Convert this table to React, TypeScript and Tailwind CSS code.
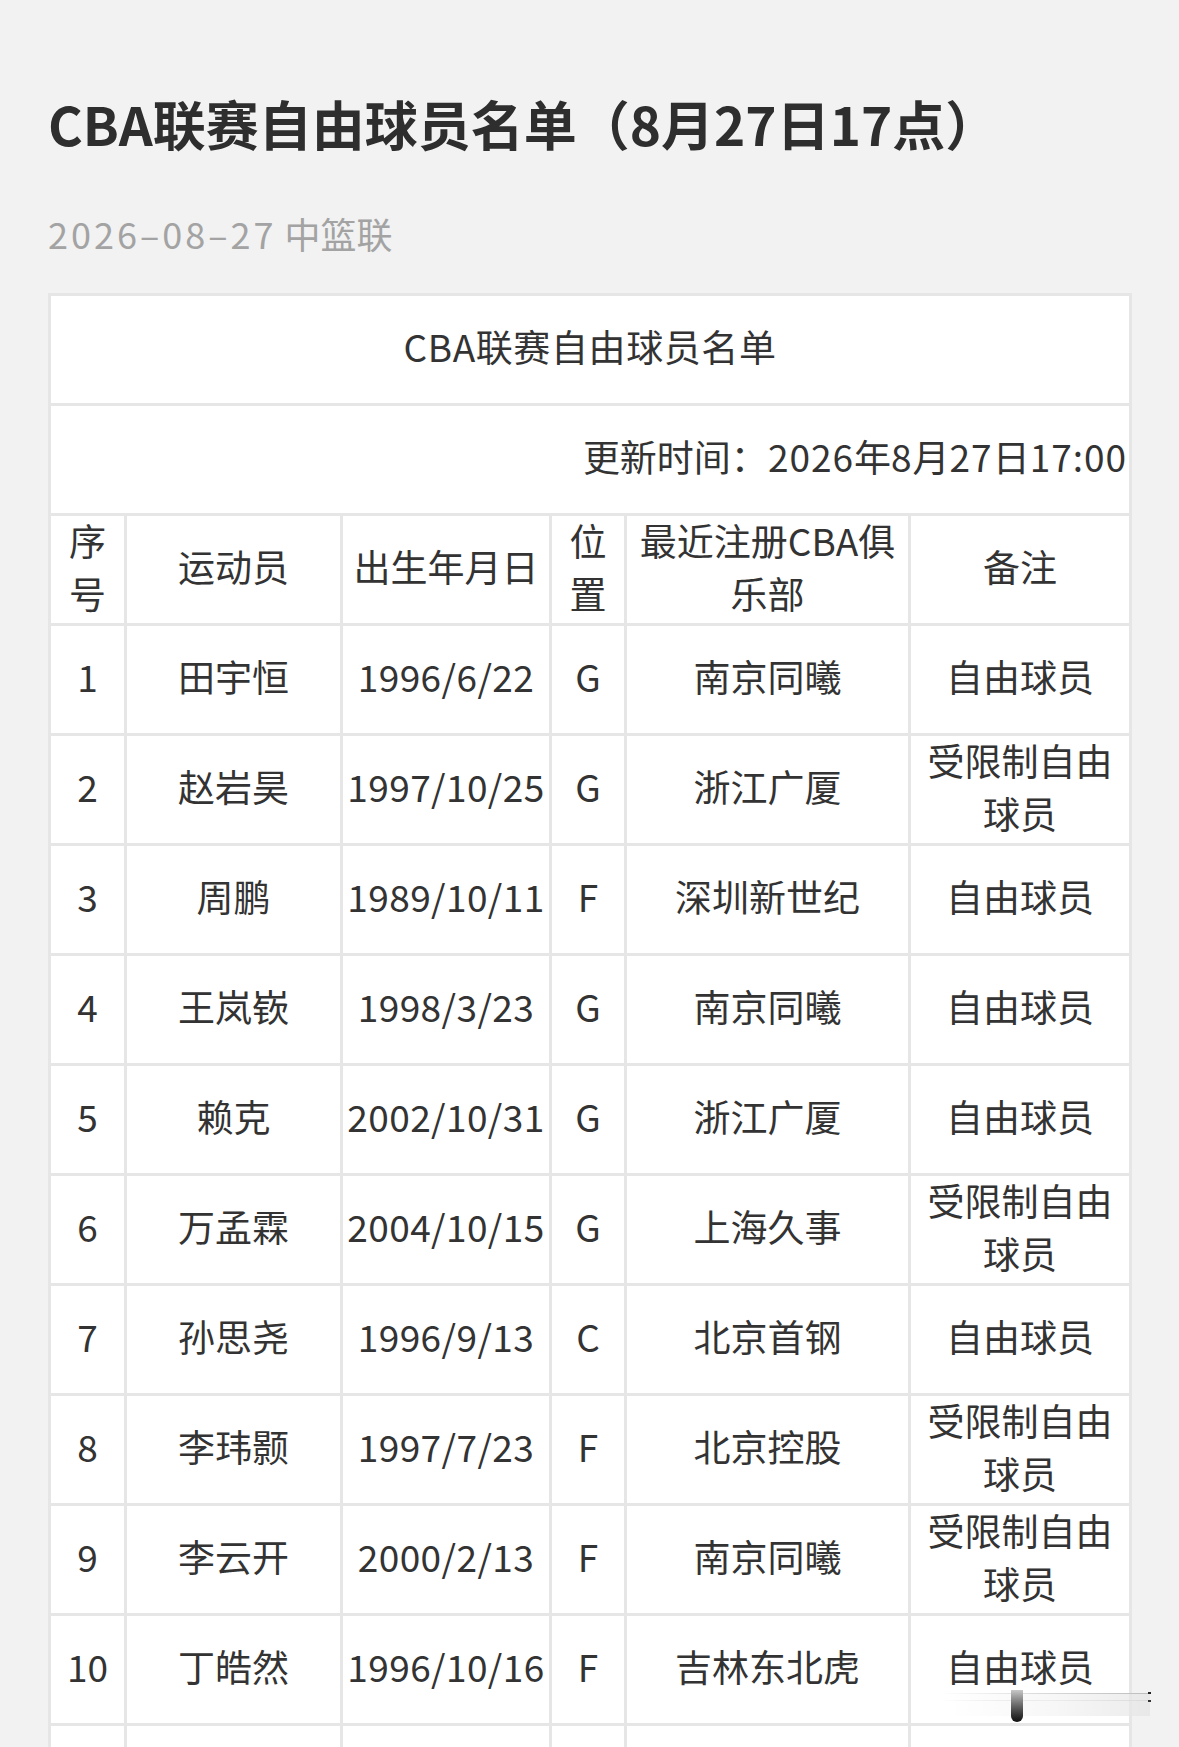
import React from "react";

type Row = { no: string; name: string; birth: string; pos: string; club: string; note: string };

const rows: Row[] = [
  { no: "1", name: "田宇恒", birth: "1996/6/22", pos: "G", club: "南京同曦", note: "自由球员" },
  { no: "2", name: "赵岩昊", birth: "1997/10/25", pos: "G", club: "浙江广厦", note: "受限制自由球员" },
  { no: "3", name: "周鹏", birth: "1989/10/11", pos: "F", club: "深圳新世纪", note: "自由球员" },
  { no: "4", name: "王岚嵚", birth: "1998/3/23", pos: "G", club: "南京同曦", note: "自由球员" },
  { no: "5", name: "赖克", birth: "2002/10/31", pos: "G", club: "浙江广厦", note: "自由球员" },
  { no: "6", name: "万孟霖", birth: "2004/10/15", pos: "G", club: "上海久事", note: "受限制自由球员" },
  { no: "7", name: "孙思尧", birth: "1996/9/13", pos: "C", club: "北京首钢", note: "自由球员" },
  { no: "8", name: "李玮颢", birth: "1997/7/23", pos: "F", club: "北京控股", note: "受限制自由球员" },
  { no: "9", name: "李云开", birth: "2000/2/13", pos: "F", club: "南京同曦", note: "受限制自由球员" },
  { no: "10", name: "丁皓然", birth: "1996/10/16", pos: "F", club: "吉林东北虎", note: "自由球员" },
];

const cell = "bg-white h-[107px] p-0 text-center align-middle leading-[53px]";

function Td({
  children,
  className = "",
  colSpan,
}: {
  children: React.ReactNode;
  className?: string;
  colSpan?: number;
}) {
  return (
    <td colSpan={colSpan} className={`${cell} ${className}`}>
      <div className="-mt-[6px]">{children}</div>
    </td>
  );
}

export default function App() {
  return (
    <div
      className="relative h-[1747px] overflow-hidden bg-[#f2f2f2] pl-[48px] text-[#333333]"
      style={{ fontFamily: '"Noto Sans CJK SC", "Noto Sans", sans-serif' }}
    >
      <h1 className="pt-[92px] h-[154px] text-[53px] leading-[62px] font-bold text-[#2e2e2e] whitespace-nowrap">
        CBA联赛自由球员名单（8月27日17点）
      </h1>
      <div className="mt-[55px] h-[48px] text-[36px] leading-[48px] text-[#a3a3a3] whitespace-nowrap">
        <span className="tracking-[3px]">2026–08–27</span> 中篮联
      </div>
      <table className="mt-[36px] w-[1084px] table-fixed border-separate border-spacing-[3px] bg-[#e6e6e6] text-[37px]">
        <colgroup>
          <col className="w-[73px]" />
          <col className="w-[213px]" />
          <col className="w-[206px]" />
          <col className="w-[72px]" />
          <col className="w-[281px]" />
          <col className="w-[218px]" />
        </colgroup>
        <tbody>
          <tr>
            <Td colSpan={6} className="tracking-[0.6px]">
              CBA联赛自由球员名单
            </Td>
          </tr>
          <tr>
            <Td colSpan={6} className="text-right pr-[2px] whitespace-nowrap">
              更新时间：<span className="tracking-[1px]">2026</span>年
              <span className="tracking-[1px]">8</span>月<span className="tracking-[1px]">27</span>日
              <span className="tracking-[1px]">17:00</span>
            </Td>
          </tr>
          <tr>
            <Td>
              序<br />号
            </Td>
            <Td>运动员</Td>
            <Td className="whitespace-nowrap">出生年月日</Td>
            <Td>
              位<br />置
            </Td>
            <Td className="whitespace-nowrap">
              最近注册CBA俱<br />乐部
            </Td>
            <Td>备注</Td>
          </tr>
          {rows.map((r) => (
            <tr key={r.no}>
              <Td>{r.no}</Td>
              <Td>{r.name}</Td>
              <Td className="whitespace-nowrap tracking-[0.4px]">{r.birth}</Td>
              <Td>{r.pos}</Td>
              <Td className="whitespace-nowrap">{r.club}</Td>
              <Td className="px-[14px]">{r.note}</Td>
            </tr>
          ))}
          <tr>
            <Td>&nbsp;</Td>
            <Td>&nbsp;</Td>
            <Td>&nbsp;</Td>
            <Td>&nbsp;</Td>
            <Td>&nbsp;</Td>
            <Td>&nbsp;</Td>
          </tr>
        </tbody>
      </table>

      {/* faint watermark remnant */}
      <div className="pointer-events-none absolute left-[940px] top-[1690px] h-[32px] w-[212px]">
        <div className="absolute left-0 top-[3px] h-[1px] w-[210px] bg-gradient-to-r from-transparent via-[#d8d8d8] to-[#bdbdbd]" />
        <div className="absolute left-0 top-[10px] h-[1px] w-[210px] bg-gradient-to-r from-transparent via-[#dcdcdc] to-[#c4c4c4]" />
        <div className="absolute left-[10px] top-[4px] h-[22px] w-[200px] bg-gradient-to-r from-transparent via-[#f4f4f4] to-[#e4e4e4] opacity-70" />
        <div className="absolute left-[208px] top-[2px] h-[2px] w-[3px] bg-[#222]" />
        <div className="absolute left-[208px] top-[10px] h-[2px] w-[3px] bg-[#333]" />
        <div className="absolute left-[71px] top-[0px] h-[32px] w-[12px] rounded-b-[6px] bg-gradient-to-b from-[#c8c8c8] to-[#111]" />
      </div>
    </div>
  );
}
